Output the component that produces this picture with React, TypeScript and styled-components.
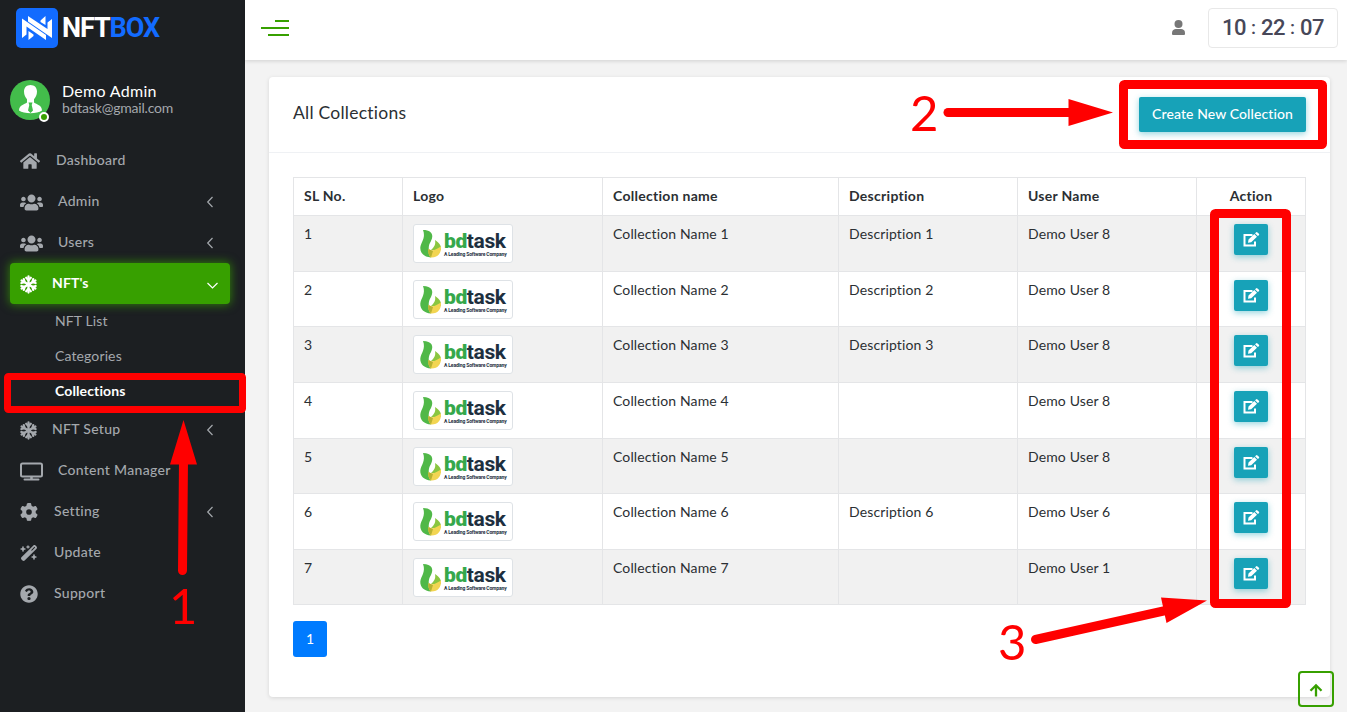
import React from "react";
import styled, { createGlobalStyle, css } from "styled-components";
import { FaHome, FaUsers, FaQuestionCircle } from "react-icons/fa";
import { FaGear, FaWandMagicSparkles } from "react-icons/fa6";

const GlobalStyle = createGlobalStyle`
  * { box-sizing: border-box; }
  body { margin: 0; background: #f3f3f3; font-family: Lato, "Open Sans", sans-serif; font-size: 14px; color: #2b2f33; overflow: hidden; }
`;

const Page = styled.div`
  display: flex;
  width: 1347px;
  height: 712px;
  position: relative;
  overflow: hidden;
`;

const Sidebar = styled.aside`
  width: 245px;
  flex: none;
  background: #1c1f22;
  display: flex;
  flex-direction: column;
`;

const Brand = styled.div`
  display: flex;
  align-items: center;
  height: 40px;
  margin: 8px 0 0 16px;
  gap: 4px;
`;

const BrandName = styled.div`
  font: 700 27px/40px Roboto, sans-serif;
  letter-spacing: -1.1px;
  color: #fff;
  span { color: #126bff; }
`;

const Profile = styled.div`
  display: flex;
  gap: 12px;
  margin: 32px 0 20px 10px;
  height: 40px;
`;

const Avatar = styled.div`
  position: relative;
  width: 40px;
  height: 40px;
`;

const Status = styled.i`
  position: absolute;
  left: 29px;
  top: 32px;
  width: 10px;
  height: 10px;
  border-radius: 50%;
  background: #37a000;
  border: 2px solid #fff;
`;

const ProfileName = styled.div`
  color: #fff;
  font-size: 16px;
  line-height: 18px;
  margin-top: 2px;
  letter-spacing: 0.3px;
`;

const ProfileMail = styled.div`
  color: #a4a8ad;
  font-size: 14px;
  line-height: 16px;
  letter-spacing: -0.2px;
`;

const NavItem = styled.a<{ $active?: boolean }>`
  display: flex;
  align-items: center;
  height: 41px;
  margin: 0 15px 0 10px;
  padding: 0 13px 1px 10px;
  border-radius: 4px;
  color: #a4a8ad;
  font-weight: 500;
  letter-spacing: 0.3px;
  svg { flex: none; }
  ${(p) => p.$active && css`
    background: #37a000;
    color: #fff;
    font-weight: 700;
    letter-spacing: 0.1px;
    padding-right: 12px;
    box-shadow: 0 0 10px 1px rgba(55, 160, 0, 0.7);
  `}
`;

const NavIcon = styled.span<{ $width: number }>`
  width: ${(p) => p.$width}px;
  display: flex;
  justify-content: center;
  margin-right: 16px;
  padding-top: 2px;
`;

const NavLabel = styled.span`
  flex: 1;
  white-space: nowrap;
  padding-bottom: 2px;
`;

const SubItem = styled.a<{ $active?: boolean }>`
  height: 35px;
  padding-left: 55px;
  line-height: 34px;
  letter-spacing: 0.12px;
  color: ${(p) => (p.$active ? "#fff" : "#a4a8ad")};
  font-weight: ${(p) => (p.$active ? 700 : 400)};
`;

const Main = styled.main`
  flex: 1;
  display: flex;
  flex-direction: column;
`;

const TopBar = styled.header`
  height: 60px;
  flex: none;
  background: #fff;
  box-shadow: 0 1px 4px rgba(0, 0, 0, 0.15);
  display: flex;
  align-items: center;
  padding: 0 9px 4px 16px;
`;

const TopUser = styled.span`
  margin-left: auto;
  margin-right: 22px;
  display: flex;
`;

const Clock = styled.div`
  width: 130px;
  height: 40px;
  border: 1px solid #e8e8e8;
  border-radius: 4px;
  display: flex;
  align-items: center;
  justify-content: center;
  font: 500 22px Roboto, sans-serif;
  color: #474758;
  padding-bottom: 2px;
  span { width: 12px; text-align: center; }
  i { width: 15px; text-align: center; font-style: normal; font-size: 19px; }
`;

const Card = styled.section`
  margin: 17px 17px 0 24px;
  height: 620px;
  background: #fff;
  border-radius: 4px;
  box-shadow: 0 1px 4px rgba(0, 0, 0, 0.12);
`;

const CardHeader = styled.div`
  display: flex;
  align-items: center;
  justify-content: space-between;
  height: 76px;
  padding: 0 24px;
  border-bottom: 1px solid #eff1f4;
`;

const CardTitle = styled.h1`
  margin: 0;
  font-size: 17.5px;
  font-weight: 400;
  letter-spacing: 0.25px;
  padding-bottom: 4px;
`;

const CreateButton = styled.button`
  width: 167px;
  height: 35px;
  border: 0;
  border-radius: 2px;
  background: #17a2b8;
  color: #fff;
  font: 500 14px Lato, sans-serif;
  padding: 0 0 2px;
  white-space: nowrap;
  letter-spacing: 0.1px;
  box-shadow: 0 2px 6px rgba(23, 162, 184, 0.45);
`;

const CardBody = styled.div`
  padding: 24px;
`;

const Table = styled.table`
  width: 1012px;
  table-layout: fixed;
  border-collapse: collapse;
`;

const Row = styled.tr<{ $shaded?: boolean; $height: number }>`
  height: ${(p) => p.$height}px;
  background: ${(p) => (p.$shaded ? "#f1f1f1" : "#fff")};
`;

const cell = css`
  border: 1px solid #e4e5e7;
  padding: 8px 10px 0;
  vertical-align: top;
  text-align: left;
  line-height: 20px;
  white-space: nowrap;
`;

const HeadCell = styled.th<{ $center?: boolean }>`
  ${cell}
  font-weight: 700;
  letter-spacing: 0.28px;
  ${(p) => p.$center && "text-align: center;"}
`;

const Cell = styled.td<{ $center?: boolean }>`
  ${cell}
  letter-spacing: 0.13px;
  ${(p) => p.$center && "text-align: center;"}
`;

const Thumb = styled.div`
  width: 100px;
  height: 39px;
  border: 1px solid #dee2e6;
  border-radius: 3px;
  background: #fff;
  display: flex;
  padding: 5px 0 0 6px;
  gap: 2px;
  svg { flex: none; }
`;

const ThumbText = styled.div`
  font: 700 21px/23px Roboto, sans-serif;
  letter-spacing: -0.4px;
  color: #1d2f3f;
  b { color: #35a84b; }
  small {
    display: block;
    margin-top: -2px;
    font: 700 5px/6px Roboto, sans-serif;
    letter-spacing: -0.15px;
  }
`;

const EditButton = styled.button`
  display: inline-flex;
  width: 34px;
  height: 31px;
  border: 0;
  border-radius: 2px;
  background: #17a2b8;
  color: #fff;
  align-items: center;
  justify-content: center;
  padding: 0;
  box-shadow: 0 2px 6px rgba(23, 162, 184, 0.45);
`;

const PageButton = styled.button`
  width: 34px;
  height: 36px;
  margin-top: 16px;
  padding: 0 0 2px;
  border: 0;
  border-radius: 3px;
  background: #007bff;
  color: #fff;
  font: 400 14px Lato, sans-serif;
`;

const ScrollTop = styled.button`
  position: absolute;
  left: 1298px;
  top: 671px;
  width: 36px;
  height: 36px;
  border: 2px solid #37a000;
  border-radius: 4px;
  background: transparent;
  padding: 2px 0 0;
  display: flex;
  align-items: center;
  justify-content: center;
`;

const Annotations = styled.svg`
  position: absolute;
  inset: 0;
  pointer-events: none;
`;

const Chevron = ({ down }: { down?: boolean }) => (
  <svg width="12" height="14" viewBox="0 0 12 14" fill="none" stroke="currentColor" strokeWidth="1.2">
    <path d={down ? "M1.5 7 6.500 12 11.500 7" : "M7.500 3 2.700 8 7.500 13"} />
  </svg>
);

const SnowIcon = () => (
  <svg width="17" height="19" viewBox="0 0 17 19" fill="none" stroke="currentColor" strokeLinecap="round">
    <g strokeWidth="2.300">
      <path d="M8.500 1.500V17.500M1.600 5.500 15.400 13.500M15.400 5.500 1.600 13.500" />
    </g>
    <g strokeWidth="2.300" strokeLinejoin="round">
      <path d="M6.200 2.800 8.500 5.100 10.800 2.800M6.200 16.200 8.500 13.900 10.800 16.200M1.400 8 4.600 7.200 3.800 4.200M15.600 8 12.400 7.200 13.200 4.200M1.400 11 4.600 11.800 3.800 14.800M15.600 11 12.400 11.800 13.200 14.800" />
    </g>
  </svg>
);

const MonitorIcon = () => (
  <svg width="23" height="19" viewBox="0 0 23 19" fill="none" stroke="currentColor">
    <rect x="1" y="1.500" width="21" height="13" rx="1.500" strokeWidth="2" />
    <path d="M11.500 15V17" strokeWidth="2.500" />
    <path d="M4.500 17.500H18.500" strokeWidth="2" strokeLinecap="round" />
  </svg>
);

const EditIcon = () => (
  <svg width="17" height="15" viewBox="0 0 17 15">
    <path d="M9.500 3H1.500V13.500H12V9.500" fill="none" stroke="currentColor" strokeWidth="2" />
    <path fill="currentColor" d="M5 10.800 5.500 7.600 11.300 2 14 4.700 8.200 10.300ZM12 1.300 13 .4Q13.700-.2 14.500.5L15.900 1.800Q16.500 2.500 15.900 3.200L14.800 4.100Z" />
  </svg>
);

const BrandMark = () => (
  <svg width="42" height="40" viewBox="0 0 42 40">
    <rect width="42" height="40" rx="5" fill="#126bff" />
    <path fill="#fff" d="M6 10.500 30 27V32L10.500 18.500V26.500L6 30ZM12 8 31.500 21V14.500L36 11V30L12 13.500ZM12.500 23 17.500 26.500V28L12.500 32ZM24.500 12.500 29.500 8V17L24.500 14Z" />
  </svg>
);

const AvatarArt = () => (
  <svg width="40" height="40" viewBox="0 0 40 40">
    <circle cx="20" cy="20" r="20" fill="#43bd4b" />
    <path fill="#fff" d="M20.500 5C16.500 5 14 7.800 14 11.500C14 15 15.500 17.500 17 19.300V22.500C14.500 24.500 9 25 9 30.500C14 34 27 34 32 30.500C32 25 26.500 24.500 24 22.500V19.300C25.500 17.500 27 15 27 11.500C27 7.800 24.500 5 20.500 5Z" />
    <path fill="#43bd4b" d="M18.500 22.500H22.500L21.700 25L23 30.500L20.500 33L18 30.500L19.300 25Z" />
  </svg>
);

const LeafMark = () => (
  <svg width="22" height="28" viewBox="0 0 22 28">
    <path fill="#50b848" d="M3 0C12 0 14 5 11 11C8.500 15 7.500 19 11 27.500C4 27 0 23 .3 17.500C1 12 6 8 3 0Z" />
    <path fill="#8ac640" d="M15 10C20 13 22 17 20.500 20L11 20C14 17 16 15 15 10Z" />
    <path fill="#f2d552" d="M8.500 19C12 22 17 19 21 16.500C21.500 23 18 28 10.500 27.500C8.500 25 8 22 8.500 19Z" />
    <path fill="#b8b332" d="M8.500 19 13 21 11 27.500C8.500 25 8 22 8.500 19Z" />
  </svg>
);

const columns = [109, 200, 236, 179, 179, 109];

const rows = [
  { name: "Collection Name 1", description: "Description 1", user: "Demo User 8", height: 56 },
  { name: "Collection Name 2", description: "Description 2", user: "Demo User 8", height: 55 },
  { name: "Collection Name 3", description: "Description 3", user: "Demo User 8", height: 56 },
  { name: "Collection Name 4", description: "", user: "Demo User 8", height: 56 },
  { name: "Collection Name 5", description: "", user: "Demo User 8", height: 55 },
  { name: "Collection Name 6", description: "Description 6", user: "Demo User 6", height: 56 },
  { name: "Collection Name 7", description: "", user: "Demo User 1", height: 55 },
];

interface NavProps {
  icon: React.ReactNode;
  width: number;
  label: string;
  arrow?: "left" | "down";
  active?: boolean;
}

const Nav = ({ icon, width, label, arrow, active }: NavProps) => (
  <NavItem $active={active}>
    <NavIcon $width={width}>{icon}</NavIcon>
    <NavLabel>{label}</NavLabel>
    {arrow && <Chevron down={arrow === "down"} />}
  </NavItem>
);

export default function App() {
  return (
    <Page>
      <GlobalStyle />
      <Sidebar>
        <Brand>
          <BrandMark />
          <BrandName>NFT<span>BOX</span></BrandName>
        </Brand>
        <Profile>
          <Avatar>
            <AvatarArt />
            <Status />
          </Avatar>
          <div>
            <ProfileName>Demo Admin</ProfileName>
            <ProfileMail>bdtask@gmail.com</ProfileMail>
          </div>
        </Profile>
        <Nav icon={<FaHome size={20} />} width={20} label="Dashboard" />
        <Nav icon={<FaUsers size={23} />} width={22} label="Admin" arrow="left" />
        <Nav icon={<FaUsers size={23} />} width={22} label="Users" arrow="left" />
        <Nav icon={<SnowIcon />} width={16} label="NFT's" arrow="down" active />
        <SubItem>NFT List</SubItem>
        <SubItem>Categories</SubItem>
        <SubItem $active>Collections</SubItem>
        <Nav icon={<SnowIcon />} width={16} label="NFT Setup" arrow="left" />
        <Nav icon={<MonitorIcon />} width={22} label="Content Manager" />
        <Nav icon={<FaGear size={18} />} width={18} label="Setting" arrow="left" />
        <Nav icon={<FaWandMagicSparkles size={18} />} width={18} label="Update" />
        <Nav icon={<FaQuestionCircle size={18} />} width={18} label="Support" />
      </Sidebar>
      <Main>
        <TopBar>
          <svg width="29" height="20" viewBox="0 0 29 20" fill="#37a000">
            <path d="M14 2h14v2H14zM0 9h28v2H0zM7 16h21v2H7z" />
          </svg>
          <TopUser>
            <svg width="15" height="16" viewBox="0 0 15 16" fill="#777">
              <circle cx="7.500" cy="4" r="4" />
              <path d="M1 13C1 10 3 9 5 9H10C12 9 14 10 14 13V14Q14 15 13 15H2Q1 15 1 14Z" />
            </svg>
          </TopUser>
          <Clock>
            <span>1</span><span>0</span><i>:</i><span>2</span><span>2</span><i>:</i><span>0</span><span>7</span>
          </Clock>
        </TopBar>
        <Card>
          <CardHeader>
            <CardTitle>All Collections</CardTitle>
            <CreateButton>Create New Collection</CreateButton>
          </CardHeader>
          <CardBody>
            <Table>
              <colgroup>
                {columns.map((w, i) => <col key={i} width={w} />)}
              </colgroup>
              <thead>
                <Row $height={38}>
                  <HeadCell>SL No.</HeadCell>
                  <HeadCell>Logo</HeadCell>
                  <HeadCell>Collection name</HeadCell>
                  <HeadCell>Description</HeadCell>
                  <HeadCell>User Name</HeadCell>
                  <HeadCell $center>Action</HeadCell>
                </Row>
              </thead>
              <tbody>
                {rows.map((r, i) => (
                  <Row key={r.name} $height={r.height} $shaded={i % 2 === 0}>
                    <Cell>{i + 1}</Cell>
                    <Cell>
                      <Thumb>
                        <LeafMark />
                        <ThumbText><b>bd</b>task<small>A Leading Software Company</small></ThumbText>
                      </Thumb>
                    </Cell>
                    <Cell>{r.name}</Cell>
                    <Cell>{r.description}</Cell>
                    <Cell>{r.user}</Cell>
                    <Cell $center><EditButton><EditIcon /></EditButton></Cell>
                  </Row>
                ))}
              </tbody>
            </Table>
            <PageButton>1</PageButton>
          </CardBody>
        </Card>
      </Main>
      <ScrollTop>
        <svg width="14" height="14" viewBox="0 0 14 14" fill="none" stroke="#37a000" strokeWidth="2.300">
          <path d="M7 13.500V2.500M1.500 7.800 7 2.300 12.500 7.800" />
        </svg>
      </ScrollTop>
      <Annotations width="1347" height="712" fill="#f00">
        <g fill="none" stroke="#f00">
          <rect x="7.500" y="376.500" width="235" height="33" rx="1" strokeWidth="7" />
          <rect x="1123.500" y="84.500" width="199" height="60" rx="1" strokeWidth="9" />
          <rect x="1214.500" y="213.500" width="72" height="390" rx="1" strokeWidth="9" />
          <g strokeWidth="9" strokeLinecap="round">
            <path d="M182.500 570.500 183.500 460" />
            <path d="M948 112.500H1072" />
            <path d="M1035.500 639.500 1168 610" />
          </g>
        </g>
        <path d="M183.500 420 197 464.500H170ZM1113 112.500 1068.500 126V99ZM1207 600.500 1166.500 623 1161 597.500Z" />
        <g fontFamily="Lato, sans-serif" fontSize="49">
          <text x="169" y="624">1</text>
          <text x="910" y="131">2</text>
          <text x="998" y="660">3</text>
        </g>
      </Annotations>
    </Page>
  );
}
